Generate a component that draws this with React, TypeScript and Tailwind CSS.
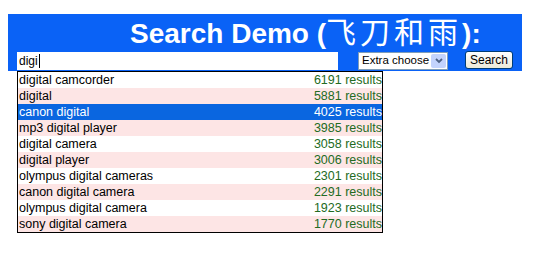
import React from 'react'

const suggestions: [string, number][] = [
  ['digital camcorder', 6191],
  ['digital', 5881],
  ['canon digital', 4025],
  ['mp3 digital player', 3985],
  ['digital camera', 3058],
  ['digital player', 3006],
  ['olympus digital cameras', 2301],
  ['canon digital camera', 2291],
  ['olympus digital camera', 1923],
  ['sony digital camera', 1770],
]

export default function App() {
  const selected = 2

  return (
    <div className="min-h-screen bg-white pt-[14px] pl-[8px] font-['Liberation_Sans',Arial,sans-serif]">
      <div className="w-[514px] bg-[#0a62f6]">
        <h1 className="h-[38px] pl-[122px] text-[28px] font-bold leading-[33px] text-white whitespace-nowrap">
          Search Demo (
          <span className="font-normal text-[30px] tracking-[4px] font-['Noto_Sans_CJK_SC',sans-serif]">飞刀和雨</span>
          ):
        </h1>
        <div className="flex h-[19px] items-start">
          <div className="ml-[9px] flex h-[18px] w-[321px] items-center bg-white pl-[2px] text-[12px] text-black">
            digi<span className="ml-[1px] h-[14px] w-[1px] bg-black" />
          </div>
          <div className="ml-[20px] flex h-[18px] w-[90px] items-center justify-between border border-[#7f9db9] bg-white pl-[3px] pr-[1px] text-[11.5px] whitespace-nowrap">
            <span>Extra choose</span>
            <span className="flex h-[14px] w-[15px] shrink-0 items-center justify-center rounded-[2px] bg-[#c3d3fd]">
              <svg width="8" height="6" viewBox="0 0 8 6">
                <path d="M1 1 L4 4 L7 1" stroke="#4d6185" strokeWidth="1.8" fill="none" />
              </svg>
            </span>
          </div>
          <button className="ml-[17px] -mt-[1px] h-[18px] w-[48px] rounded-[3px] border border-[#003c74] bg-gradient-to-b from-white to-[#ece9d8] text-[12px] leading-[14px] text-black">
            Search
          </button>
        </div>
      </div>
      <div className="ml-[9px] w-[366px] border border-black text-[12.5px] leading-[16px]">
        {suggestions.map(([term, count], i) => {
          const bg = i === selected ? 'bg-[#0a66e0]' : i % 2 === 1 ? 'bg-[#fde5e5]' : 'bg-white'
          return (
            <div key={term} className={`flex h-[16px] items-center justify-between pl-[1px] ${bg}`}>
              <span className={i === selected ? 'text-white' : 'text-black'}>{term}</span>
              <span className={i === selected ? 'text-white' : 'text-[#236b23]'}>{count} results</span>
            </div>
          )
        })}
      </div>
    </div>
  )
}
